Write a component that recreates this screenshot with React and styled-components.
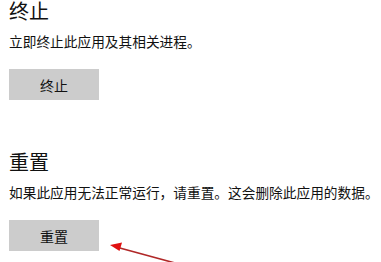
import React from "react";
import styled, { createGlobalStyle } from "styled-components";

const Global = createGlobalStyle`
  html, body { margin: 0; padding: 0; background: #fff; }
  body { font-family: "Noto Sans CJK SC", "Noto Sans", sans-serif; color: #000; }
`;

const Page = styled.div`
  position: relative;
  width: 381px;
  height: 262px;
  overflow: hidden;
  padding: 1px 0 0 9px;
  box-sizing: border-box;
  display: flex;
  flex-direction: column;
`;

const Section = styled.section`
  display: flex;
  flex-direction: column;
  align-items: flex-start;
  margin-top: ${(p) => p.$top || 0}px;
`;

const Title = styled.h2`
  margin: 0;
  font-size: 20px;
  line-height: 20px;
  font-weight: 400;
  color: #111;
`;

const Desc = styled.p`
  margin: 10px 0 0;
  font-size: 13.7px;
  line-height: 20px;
  white-space: nowrap;
  color: #111;
`;

const Button = styled.button`
  margin-top: 18px;
  width: 90px;
  height: 31px;
  border: none;
  background: #cccccc;
  font-family: inherit;
  font-size: 14px;
  color: #111;
  padding: 0;
  display: flex;
  align-items: center;
  justify-content: center;
`;

const Arrow = styled.svg`
  position: absolute;
  left: 0;
  top: 0;
  pointer-events: none;
`;

export default function App() {
  return (
    <>
      <Global />
      <Page>
        <Section>
          <Title>终止</Title>
          <Desc>立即终止此应用及其相关进程。</Desc>
          <Button>终止</Button>
        </Section>
        <Section $top={52}>
          <Title>重置</Title>
          <Desc>如果此应用无法正常运行，请重置。这会删除此应用的数据。</Desc>
          <Button>重置</Button>
        </Section>
        <Arrow width="381" height="262" viewBox="0 0 381 262">
          <line x1="175" y1="263" x2="118" y2="247.5" stroke="#b02828" strokeWidth="1.6" />
          <polygon points="110,245 122,242.5 119.5,251" fill="#e01010" />
        </Arrow>
      </Page>
    </>
  );
}
